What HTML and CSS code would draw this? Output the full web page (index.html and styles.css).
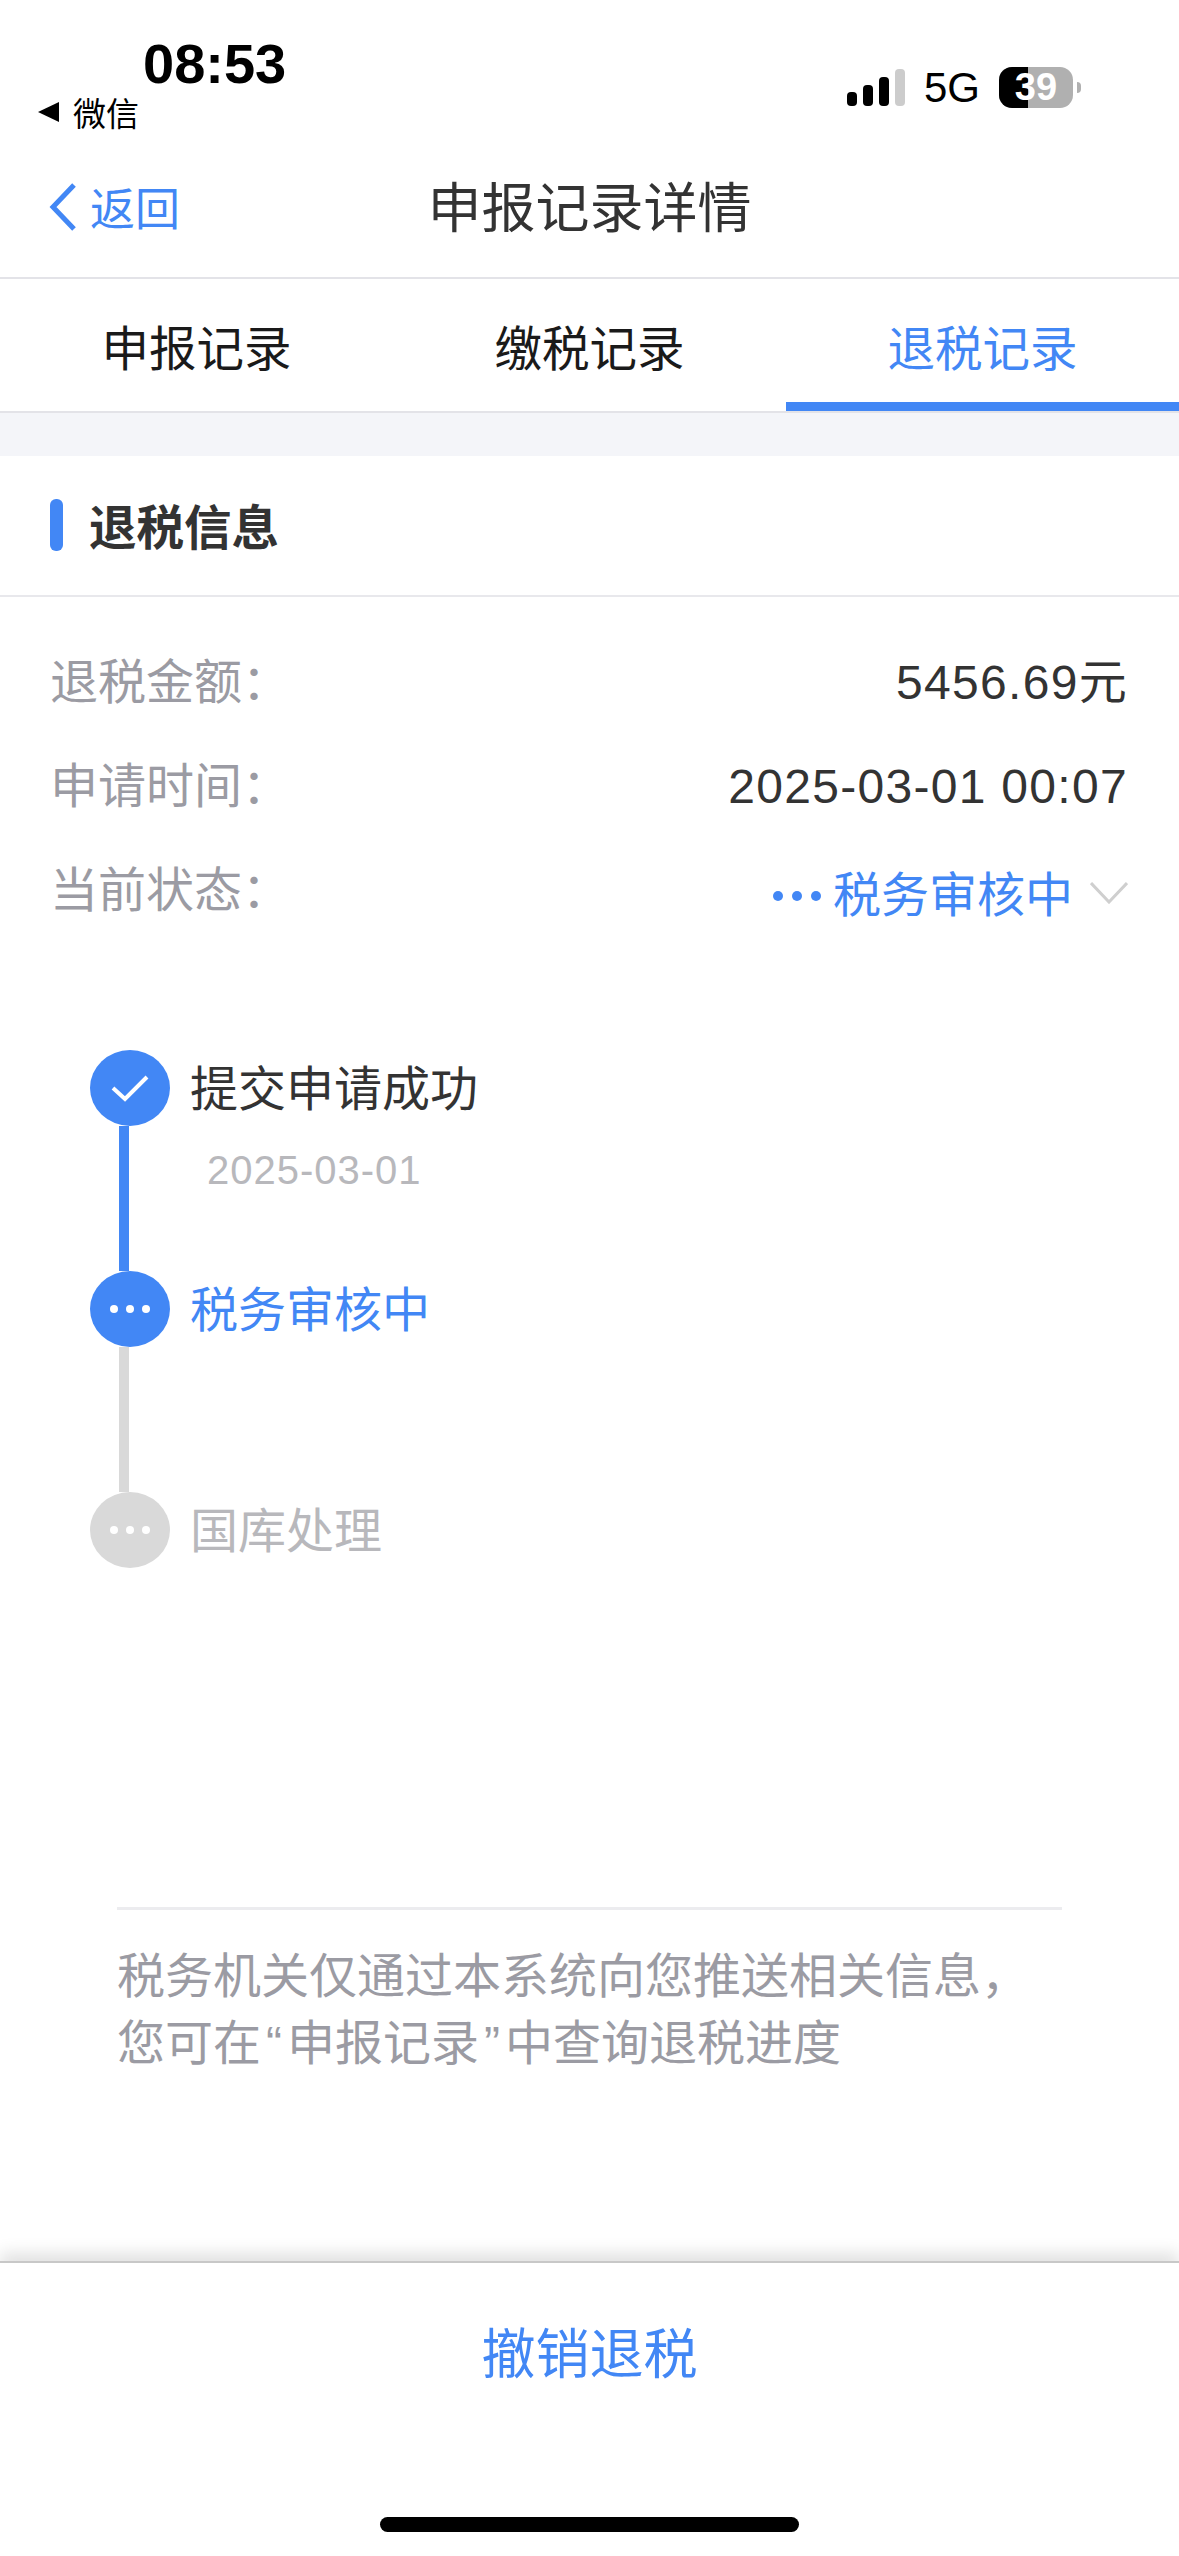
FILE: index.html
```html
<!DOCTYPE html>
<html lang="zh-CN">
<head>
    <meta charset="UTF-8">
    <meta name="viewport" content="width=device-width, initial-scale=1.0">
    <title>申报记录详情</title>
    <link rel="stylesheet" href="styles.css">
</head>
<body>

<div id="page">
    <div class="status-bar">
        <div class="status-left">
            <div class="time">08:53</div>
            <div class="back-app"><span class="back-arrow"></span>微信</div>
        </div>
        <div class="status-right">
            <div class="signal">
                <span class="bar bar-1"></span>
                <span class="bar bar-2"></span>
                <span class="bar bar-3"></span>
                <span class="bar bar-4"></span>
            </div>
            <div class="network">5G</div>
            <div class="battery"><span class="battery-fill"></span><span class="battery-text">39</span></div>
            <span class="battery-nub"></span>
        </div>
    </div>

    <div class="nav">
        <div class="nav-back">
            <svg class="nav-chevron" viewBox="0 0 28 50" width="28" height="50">
                <path d="M25 3 L4 25 L25 47" fill="none" stroke="#4287f5" stroke-width="5"/>
            </svg>
            <span>返回</span>
        </div>
        <div class="nav-title">申报记录详情</div>
    </div>

    <div class="tabs">
        <div class="tab">申报记录</div>
        <div class="tab">缴税记录</div>
        <div class="tab active">退税记录</div>
    </div>

    <div class="gap"></div>

    <div class="section-title"><span class="title-mark"></span>退税信息</div>

    <div class="info">
        <div class="info-row">
            <span class="info-label">退税金额：</span>
            <span class="info-value">5456.69元</span>
        </div>
        <div class="info-row">
            <span class="info-label">申请时间：</span>
            <span class="info-value">2025-03-01 00:07</span>
        </div>
        <div class="info-row">
            <span class="info-label">当前状态：</span>
            <span class="info-value status-value">
                <span class="status-dots"><i></i><i></i><i></i></span>
                税务审核中
                <svg class="status-chevron" viewBox="0 0 38 22" width="38" height="22">
                    <path d="M1 1 L19 20 L37 1" fill="none" stroke="#cfcfcf" stroke-width="3"/>
                </svg>
            </span>
        </div>
    </div>

    <div class="timeline">
        <div class="step">
            <div class="step-mark">
                <div class="circle">
                    <svg viewBox="0 0 38 28" width="38" height="28">
                        <path d="M2 14 L14 25 L36 3" fill="none" stroke="#fff" stroke-width="4"/>
                    </svg>
                </div>
                <div class="line"></div>
            </div>
            <div class="step-body">
                <div class="step-name">提交申请成功</div>
                <div class="step-date">2025-03-01</div>
            </div>
        </div>
        <div class="step">
            <div class="step-mark">
                <div class="circle"><span class="dots"><i></i><i></i><i></i></span></div>
                <div class="line line-todo"></div>
            </div>
            <div class="step-body">
                <div class="step-name current">税务审核中</div>
            </div>
        </div>
        <div class="step last">
            <div class="step-mark">
                <div class="circle circle-todo"><span class="dots"><i></i><i></i><i></i></span></div>
            </div>
            <div class="step-body">
                <div class="step-name todo">国库处理</div>
            </div>
        </div>
    </div>

    <div class="notice">
        <p>税务机关仅通过本系统向您推送相关信息，</p>
        <p>您可在<span class="quote">“</span>申报记录<span class="quote">”</span>中查询退税进度</p>
    </div>

    <div class="bottom">
        <div class="cancel">撤销退税</div>
        <div class="home-bar"></div>
    </div>
</div>

</body>
</html>
```

FILE: styles.css
```css
* {
    box-sizing: border-box;
}

body {
    margin: 0;
    background-color: #fff;
    font-family: "Liberation Sans", "Noto Sans CJK SC", sans-serif;
    color: #333;
}

#page {
    width: 1179px;
    height: 2556px;
    display: flex;
    flex-direction: column;
    overflow: hidden;
}

/* status bar */
.status-bar {
    height: 170px;
    display: flex;
    justify-content: space-between;
    flex-shrink: 0;
}

.status-left {
    padding: 32px 0 0 38px;
}

.time {
    margin-left: 105px;
    font-size: 56px;
    line-height: 64px;
    font-weight: 700;
    color: #000;
}

.back-app {
    display: flex;
    align-items: center;
    height: 32px;
    font-size: 33px;
    color: #000;
}

.back-arrow {
    width: 0;
    height: 0;
    margin-right: 14px;
    border-top: 10px solid transparent;
    border-bottom: 10px solid transparent;
    border-right: 21px solid #000;
}

.status-right {
    display: flex;
    align-items: flex-start;
    padding: 67px 98px 0 0;
}

.signal {
    display: flex;
    align-items: flex-end;
    gap: 6px;
    height: 37px;
    margin-top: 2px;
}

.bar {
    width: 10px;
    border-radius: 4px;
    background-color: #000;
}

.bar-1 { height: 14px; }
.bar-2 { height: 21px; }
.bar-3 { height: 29px; }
.bar-4 { height: 37px; background-color: #ccc; }

.network {
    margin-left: 19px;
    font-size: 42px;
    line-height: 42px;
    color: #000;
}

.battery {
    width: 74px;
    height: 41px;
    margin-left: 19px;
    border-radius: 13px;
    background-color: #b0b0b0;
    overflow: hidden;
    display: flex;
    align-items: center;
    justify-content: center;
    position: relative;
}

.battery-fill {
    position: absolute;
    left: 0;
    top: 0;
    bottom: 0;
    width: 29px;
    background-color: #000;
}

.battery-text {
    position: relative;
    font-size: 38px;
    font-weight: 700;
    color: #fff;
}

.battery-nub {
    width: 4px;
    height: 11px;
    margin: 15px 0 0 4px;
    border-radius: 0 4px 4px 0;
    background-color: #b0b0b0;
}

/* nav */
.nav {
    height: 109px;
    flex-shrink: 0;
    position: relative;
    display: flex;
    align-items: flex-start;
    justify-content: center;
    border-bottom: 2px solid #e3e3e8;
}

.nav-back {
    position: absolute;
    left: 49px;
    top: 4px;
    display: flex;
    align-items: center;
    gap: 13px;
    font-size: 45px;
    color: #4287f5;
}

.nav-title {
    font-size: 54px;
    line-height: 64px;
    margin-top: 7px;
    color: #333;
}

/* tabs */
.tabs {
    height: 134px;
    flex-shrink: 0;
    display: grid;
    grid-template-columns: 393px 393px 393px;
    border-bottom: 2px solid #e3e3e8;
}

.tab {
    height: 132px;
    padding-top: 38px;
    font-size: 47.5px;
    line-height: 66px;
    text-align: center;
    color: #1a1a1a;
}

.tab.active {
    color: #4287f5;
    border-bottom: 9px solid #4287f5;
}

.gap {
    height: 43px;
    flex-shrink: 0;
    background-color: #f4f5f9;
}

/* section */
.section-title {
    height: 141px;
    flex-shrink: 0;
    display: flex;
    align-items: center;
    gap: 26px;
    padding-left: 50px;
    padding-bottom: 2px;
    font-size: 47.5px;
    font-weight: 700;
    color: #333;
    border-bottom: 2px solid #e8e8ec;
}

.title-mark {
    width: 13px;
    height: 52px;
    border-radius: 6px;
    background-color: #4287f5;
}

.info {
    padding: 51px 51px 0 50px;
}

.info-row {
    display: flex;
    justify-content: space-between;
    height: 104px;
    font-size: 48px;
    line-height: 70px;
}

.info-label {
    color: #9b9ba3;
}

.info-value {
    color: #333;
    letter-spacing: 1.3px;
}

.status-value {
    display: flex;
    align-items: center;
    height: 80px;
    letter-spacing: 0;
    color: #4287f5;
}

.status-dots {
    display: flex;
    gap: 9px;
    margin-right: 12px;
}

.status-dots i {
    width: 10px;
    height: 10px;
    border-radius: 50%;
    background-color: #4287f5;
}

.status-chevron {
    margin-left: 17px;
    margin-bottom: 6px;
}

/* timeline */
.timeline {
    margin-top: 90px;
    padding-left: 90px;
}

.step {
    display: flex;
    height: 221px;
}

.step.last {
    height: 76px;
}

.step-mark {
    width: 80px;
    display: flex;
    flex-direction: column;
    align-items: center;
    flex-shrink: 0;
}

.circle {
    width: 80px;
    height: 76px;
    border-radius: 50%;
    background-color: #4287f5;
    display: flex;
    align-items: center;
    justify-content: center;
    flex-shrink: 0;
}

.circle-todo {
    background-color: #d9d9d9;
}

.dots {
    display: flex;
    gap: 8px;
}

.dots i {
    width: 8px;
    height: 8px;
    border-radius: 50%;
    background-color: #fff;
}

.line {
    flex: 1;
    width: 10px;
    margin-right: 12px;
    background-color: #4287f5;
}

.line-todo {
    background-color: #d9d9d9;
}

.step-body {
    padding: 2px 0 0 20px;
}

.step-name {
    font-size: 48px;
    line-height: 76px;
    color: #333;
}

.step-name.current {
    color: #4287f5;
}

.step-name.todo {
    color: #b8b8bc;
}

.step-date {
    margin: 20px 0 0 17px;
    font-size: 40px;
    line-height: 44px;
    letter-spacing: 1px;
    color: #b8b8bc;
}

/* notice */
.notice {
    margin: 339px 117px 0;
    padding-top: 33px;
    border-top: 3px solid #ececef;
    font-size: 48px;
    line-height: 67px;
    color: #9b9ba3;
}

.notice p {
    margin: 0;
}

.quote {
    padding: 0 5px;
}

/* bottom */
.bottom {
    margin-top: auto;
    height: 295px;
    flex-shrink: 0;
    display: flex;
    flex-direction: column;
    align-items: center;
    background-color: #fff;
    border-top: 2px solid #c8c8c8;
    box-shadow: 0 -8px 16px rgba(0, 0, 0, 0.12);
}

.cancel {
    margin-top: 54px;
    font-size: 54px;
    line-height: 76px;
    color: #4287f5;
}

.home-bar {
    width: 419px;
    height: 15px;
    margin-top: 124px;
    border-radius: 8px;
    background-color: #000;
}
```
